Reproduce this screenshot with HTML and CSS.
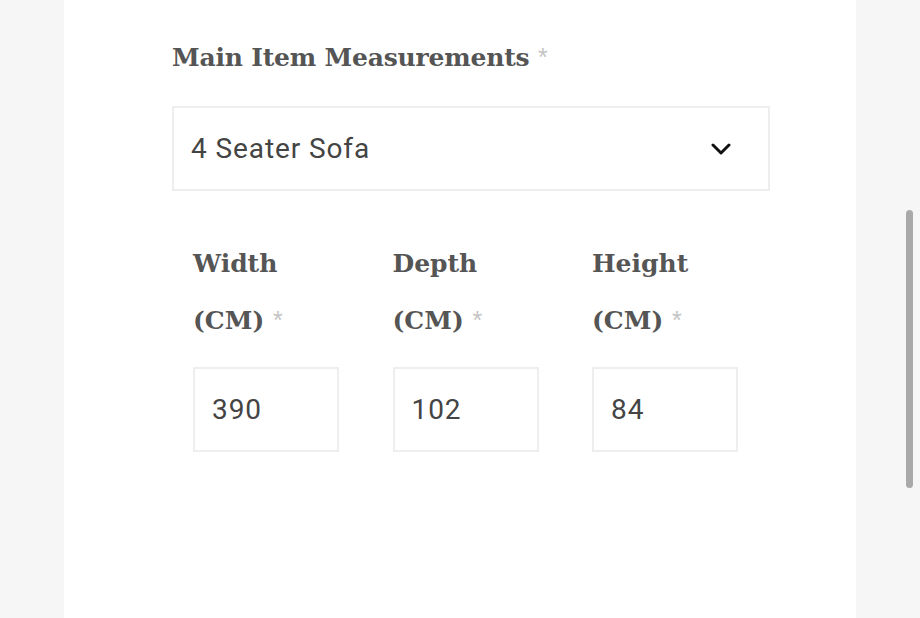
FILE: index.html
```html
<!DOCTYPE html>
<html>
<head>
<meta charset="utf-8">
<link rel="stylesheet" href="styles.css">
</head>
<body>
<div class="page">
  <div class="form">
    <div class="heading">Main Item Measurements <span class="req">*</span></div>
    <div class="select">
      <span class="select-value">4 Seater Sofa</span>
      <svg class="chev" width="20" height="12" viewBox="0 0 20 12"><polyline points="2,2 10,10 18,2" fill="none" stroke="#111" stroke-width="3" stroke-linecap="round" stroke-linejoin="round"/></svg>
    </div>
    <div class="dims">
      <div class="dim">
        <div class="label">Width<br>(CM) <span class="req">*</span></div>
        <div class="input">390</div>
      </div>
      <div class="dim">
        <div class="label">Depth<br>(CM) <span class="req">*</span></div>
        <div class="input">102</div>
      </div>
      <div class="dim">
        <div class="label">Height<br>(CM) <span class="req">*</span></div>
        <div class="input">84</div>
      </div>
    </div>
  </div>
</div>
<div class="scrollbar"></div>
</body>
</html>
```
FILE: styles.css
```css
html, body {
  margin: 0;
  padding: 0;
  background: #f6f6f6;
  height: 618px;
  overflow: hidden;
}
.page {
  margin-left: 64px;
  width: 792px;
  height: 618px;
  background: #fff;
}
.form {
  padding: 37px 0 0 108px;
}
.heading {
  font-family: "DejaVu Serif", serif;
  font-weight: bold;
  font-size: 25px;
  letter-spacing: -0.2px;
  line-height: 40px;
  color: #555;
}
.req {
  color: #c4c4c4;
  font-weight: normal;
  font-family: "Liberation Sans", sans-serif;
}
.select {
  margin-top: 28px;
  box-sizing: border-box;
  width: 598px;
  height: 85px;
  border: 2px solid #eeeeee;
  display: flex;
  align-items: center;
  justify-content: space-between;
  padding: 0 37px 0 17px;
}
.select-value {
  font-family: Roboto, sans-serif;
  font-size: 28px;
  letter-spacing: 0.9px;
  color: #444;
}
.chev {
  display: block;
}
.dims {
  display: grid;
  grid-template-columns: 199.5px 199.5px 199.5px;
  padding-left: 21px;
  margin-top: 45px;
}
.label {
  font-family: "DejaVu Serif", serif;
  font-weight: bold;
  font-size: 25px;
  line-height: 56px;
  color: #555;
}
.input {
  margin-top: 18px;
  box-sizing: border-box;
  width: 146px;
  height: 85px;
  border: 2px solid #eeeeee;
  display: flex;
  align-items: center;
  padding-left: 17px;
  font-family: Roboto, sans-serif;
  font-size: 28px;
  letter-spacing: 0.9px;
  color: #444;
}
.scrollbar {
  position: absolute;
  left: 906px;
  top: 210px;
  width: 7px;
  height: 278px;
  border-radius: 4px;
  background: #a9a9a9;
}
```
